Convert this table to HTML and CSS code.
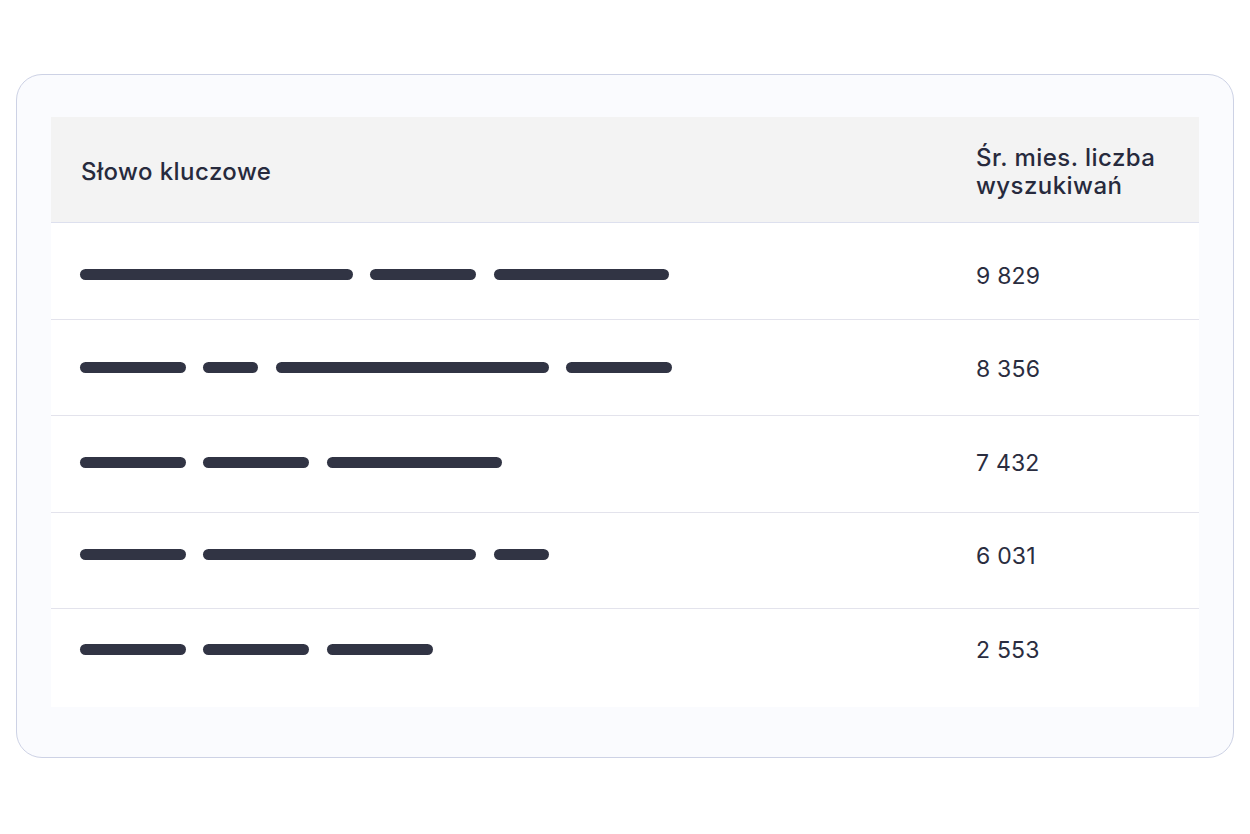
FILE: index.html
```html
<!DOCTYPE html>
<html lang="pl">
<head>
<meta charset="utf-8">
<title>Słowa kluczowe</title>
<link rel="stylesheet" href="styles.css">
</head>
<body>
<div class="page">
  <section class="card">
    <div class="table">
      <div class="thead">
        <div class="th th-key">Słowo kluczowe</div>
        <div class="th th-num">Śr. mies. liczba<br>wyszukiwań</div>
      </div>
      <div class="row r1">
        <div class="bars"><span class="bar w273"></span><span class="bar w106"></span><span class="bar w175"></span></div>
        <div class="num">9 829</div>
      </div>
      <div class="row r2">
        <div class="bars"><span class="bar w106"></span><span class="bar w55"></span><span class="bar w273"></span><span class="bar w106"></span></div>
        <div class="num">8 356</div>
      </div>
      <div class="row r3">
        <div class="bars"><span class="bar w106"></span><span class="bar w106"></span><span class="bar w175"></span></div>
        <div class="num">7 432</div>
      </div>
      <div class="row r4">
        <div class="bars"><span class="bar w106"></span><span class="bar w273"></span><span class="bar w55"></span></div>
        <div class="num">6 031</div>
      </div>
      <div class="row r5">
        <div class="bars"><span class="bar w106"></span><span class="bar w106"></span><span class="bar w106"></span></div>
        <div class="num">2 553</div>
      </div>
    </div>
  </section>
</div>
</body>
</html>
```

FILE: styles.css
```css
* { box-sizing: border-box; }
html, body { margin: 0; padding: 0; background: #ffffff; }
body {
  font-family: Inter, "Noto Sans", "Liberation Sans", sans-serif;
  color: #272a3d;
}
.page {
  padding: 74px 16px 0 16px;
}
.card {
  width: 1218px;
  height: 684px;
  border: 1px solid #cdd2e5;
  border-radius: 26px;
  background: #fafbfe;
  padding: 42px 34px 50px 34px;
}
.table {
  background: #ffffff;
  height: 590px;
  display: flex;
  flex-direction: column;
}
.thead {
  display: grid;
  grid-template-columns: 925px 1fr;
  align-items: center;
  height: 106px;
  background: #f3f3f3;
  border-bottom: 1px solid #dde0ee;
  font-size: 24px;
  font-weight: 500;
  letter-spacing: 0.45px;
}
.th-key { padding-left: 30px; padding-top: 3px; }
.th-num { line-height: 28px; padding-top: 4px; }
.row {
  display: grid;
  grid-template-columns: 925px 1fr;
  align-content: start;
  align-items: center;
  height: 96.5px;
  border-bottom: 1px solid #e3e3ec;
}
.r1 { padding-top: 36.5px; }
.r2 { padding-top: 33px; }
.r3 { padding-top: 31px; }
.r4 { padding-top: 27px; }
.r5 { padding-top: 25px; border-bottom: 0; flex: 1; }
.bars {
  display: flex;
  gap: 17.3px;
  padding-left: 29px;
}
.bar {
  display: block;
  height: 11px;
  border-radius: 6px;
  background: #313444;
}
.w273 { width: 273px; }
.w175 { width: 175px; }
.w106 { width: 106px; }
.w55 { width: 55px; }
.num {
  font-size: 23px;
  font-weight: 400;
  letter-spacing: 0.2px;
  line-height: 28px;
  padding-top: 2px;
  color: #2a2d40;
}
```
